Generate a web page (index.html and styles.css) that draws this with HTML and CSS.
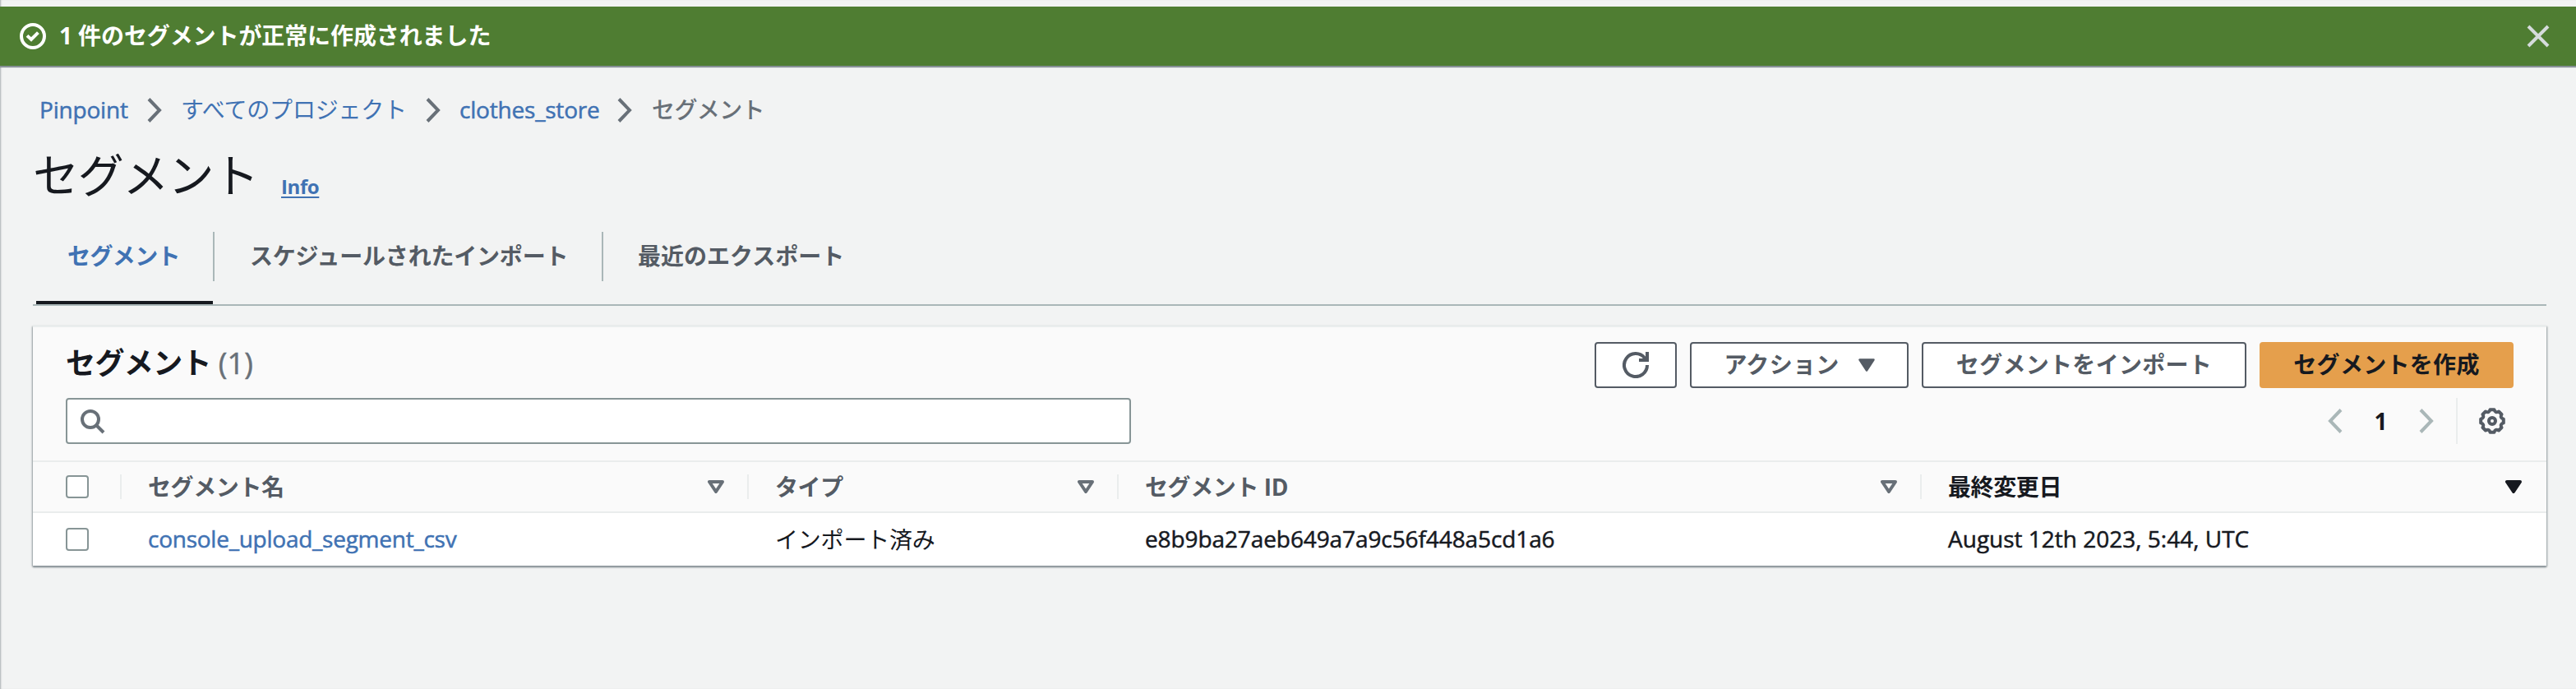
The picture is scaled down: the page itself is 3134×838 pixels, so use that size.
FILE: index.html
```html
<!DOCTYPE html>
<html lang="ja">
<head>
<meta charset="utf-8">
<title>セグメント</title>
<link rel="stylesheet" href="styles.css">
</head>
<body>
<div class="flash">
  <svg class="icon-32" viewBox="0 0 16 16" fill="none" stroke="#fff" stroke-width="2"><circle cx="8" cy="8" r="7"/><path d="M4.500 7.700l2.500 2.300 4.200-4.200"/></svg>
  <span class="flash-text">1 件のセグメントが正常に作成されました</span>
  <svg class="close" viewBox="0 0 28 28" stroke="#d5dbdb" stroke-width="4"><path d="M2 2l24 24M26 2L2 26"/></svg>
</div>
<main class="page">
  <nav class="crumbs">
    <a class="crumb c1">Pinpoint</a>
    <svg class="chev" viewBox="0 0 18 30"><path d="M2 1.500L15 15L2 28.500"/></svg>
    <a class="crumb c2">すべてのプロジェクト</a>
    <svg class="chev" viewBox="0 0 18 30"><path d="M2 1.500L15 15L2 28.500"/></svg>
    <a class="crumb c3">clothes_store</a>
    <svg class="chev" viewBox="0 0 18 30"><path d="M2 1.500L15 15L2 28.500"/></svg>
    <span class="crumb here">セグメント</span>
  </nav>
  <header class="title"><h1>セグメント</h1><a class="info">Info</a></header>
  <div class="tabs">
    <div class="tab active"><span>セグメント</span></div>
    <div class="tab t2"><span>スケジュールされたインポート</span></div>
    <div class="tab t3"><span>最近のエクスポート</span></div>
  </div>
  <section class="card">
    <div class="card-head">
      <div class="head-row">
        <h2>セグメント <span class="count">(1)</span></h2>
        <div class="actions">
          <button class="btn refresh"><svg class="icon-32" viewBox="0 0 32 32" fill="none" stroke="#545b64" stroke-width="4"><path d="M30 16a14 14 0 1 1-3-8.600L29 10"/><path d="M30 0v10H20"/></svg></button>
          <button class="btn action">アクション<svg class="tri" viewBox="0 0 20 16"><path d="M1.500 1.500h17L10 14.500z" fill="#545b64" stroke="#545b64" stroke-width="2.500" stroke-linejoin="round"/></svg></button>
          <button class="btn import">セグメントをインポート</button>
          <button class="btn primary">セグメントを作成</button>
        </div>
      </div>
      <div class="filter-row">
        <div class="search"><svg viewBox="0 0 30 30" fill="none" stroke="#687078" stroke-width="4"><circle cx="12" cy="12" r="10"/><path d="M19 19l9 9"/></svg></div>
        <div class="pager">
          <svg class="pg" viewBox="0 0 18 30"><path d="M16 1.500L3 15l13 13.500"/></svg>
          <b>1</b>
          <svg class="pg" viewBox="0 0 18 30"><path d="M2 1.500L15 15L2 28.500"/></svg>
          <span class="gear"><svg class="icon-32" viewBox="-16 -16 32 32" fill="none" stroke="#545b64" stroke-width="4" stroke-linejoin="round"><path d="M-2.400-13.800H2.400Q3.800-9.200 8-11.500L11.500-8Q9.200-3.800 13.800-2.400V2.400Q9.200 3.800 11.500 8L8 11.500Q3.800 9.200 2.400 13.800H-2.400Q-3.800 9.200-8 11.500L-11.500 8Q-9.200 3.800-13.800 2.400V-2.400Q-9.200-3.800-11.500-8L-8-11.500Q-3.800-9.200-2.400-13.800z"/><circle r="4"/></svg></span>
        </div>
      </div>
    </div>
    <div class="row thead">
      <div class="cell check"><i class="box"></i></div>
      <div class="cell">セグメント名<svg class="tri" viewBox="0 0 20 16"><path d="M2 2h16L10 14z"/></svg></div>
      <div class="cell">タイプ<svg class="tri" viewBox="0 0 20 16"><path d="M2 2h16L10 14z"/></svg></div>
      <div class="cell">セグメント ID<svg class="tri" viewBox="0 0 20 16"><path d="M2 2h16L10 14z"/></svg></div>
      <div class="cell sorted">最終変更日<svg class="tri" viewBox="0 0 20 16"><path d="M2 2h16L10 14z"/></svg></div>
    </div>
    <div class="row tbody">
      <div class="cell check"><i class="box"></i></div>
      <div class="cell"><a class="name">console_upload_segment_csv</a></div>
      <div class="cell">インポート済み</div>
      <div class="cell"><span class="sid">e8b9ba27aeb649a7a9c56f448a5cd1a6</span></div>
      <div class="cell"><span class="date">August 12th 2023, 5:44, UTC</span></div>
    </div>
  </section>
</main>
</body>
</html>
```
FILE: styles.css
```css
* { box-sizing: border-box; }
body {
  margin: 0;
  padding-top: 8px;
  height: 838px;
  overflow: hidden;
  background: #f2f3f3;
  color: #16191f;
  font: 28px/44px "Open Sans", "Noto Sans CJK JP", sans-serif;
  box-shadow: inset 2px 0 2px -1px #aab0b3;
}
svg { display: block; flex: none; }
.icon-32 { width: 32px; height: 32px; }
a { color: #4072b3; }

.flash {
  display: flex;
  align-items: center;
  height: 72px;
  padding: 0 32px 0 24px;
  background: #4f7d32;
  color: #fff;
  font-weight: 700;
  box-shadow: 0 2px 1px #879096;
}
.flash-text { flex: 1; margin-left: 16px; padding-bottom: 2px; letter-spacing: -.1px; white-space: nowrap; }
.close { width: 28px; height: 28px; }

.page { padding: 0 36px 0 40px; }
.crumbs { display: flex; align-items: center; height: 44px; margin: 32px 0 0 8px; }
.crumb { padding-bottom: 2px; letter-spacing: -.2px; white-space: nowrap; }
.c1 { width: 131px; letter-spacing: -.2px; }
.c2 { width: 298px; margin-left: 23px; }
.c3 { width: 192px; margin-left: 23px; letter-spacing: -.2px; }
.here { margin-left: 24px; color: #687078; font-weight: 500; letter-spacing: -.6px; }
.chev { width: 18px; height: 30px; fill: none; stroke: #687078; stroke-width: 4; margin-top: -1px; }

/* The regular Latin face is slightly thickened to sit evenly beside the kana. */
.c1, .c3, .count, .name, .sid, .date { -webkit-text-stroke: .5px currentColor; }

.title { display: flex; align-items: baseline; height: 80px; margin-top: 16px; }
h1 { margin: 0; width: 302px; font-size: 56px; font-weight: 400; line-height: 80px; letter-spacing: -1.2px; white-space: nowrap; }
.info { font-size: 24px; font-weight: 700; letter-spacing: -.4px; line-height: 40px; text-decoration: underline; text-decoration-thickness: 2px; text-underline-offset: 3px; transform: translateY(2px); }

.tabs { display: flex; height: 118px; margin-top: 2px; padding: 28px 0 0 4px; border-bottom: 2px solid #aab7b8; font-weight: 700; color: #545b64; letter-spacing: -.2px; }
.tab { display: flex; align-items: center; height: 60px; padding-bottom: 2px; white-space: nowrap; }
.tab.active { width: 215px; height: 88px; padding: 0 0 26px 38px; color: #4072b3; border-bottom: 4px solid #16191f; letter-spacing: -.6px; }
.t2 { width: 475px; padding-left: 43px; border-left: 2px solid #aab7b8; border-right: 2px solid #aab7b8; }
.t3 { padding-left: 42px; letter-spacing: 0; }

.card { margin-top: 24px; border-top: 2px solid #eaeded; background: #fff; box-shadow: 0 2px 2px #879196, 1px 1px 2px #aab0b3, -1px 1px 2px #aab0b3; }
.card-head { height: 164px; padding: 18px 40px 0; background: #fafafa; border-bottom: 2px solid #eaeded; }
.head-row { display: flex; justify-content: space-between; height: 56px; }
h2 { margin: 0; font-size: 36px; font-weight: 700; line-height: 52px; letter-spacing: -.6px; white-space: nowrap; }
.count { color: #687078; font-weight: 400; letter-spacing: .2px; }
.actions { display: flex; gap: 16px; }
.btn { display: flex; align-items: center; justify-content: center; height: 56px; padding: 0 0 2px; border: 2px solid #545b64; border-radius: 4px; background: #fff; color: #545b64; font: inherit; font-weight: 700; letter-spacing: .3px; white-space: nowrap; }
.refresh { width: 100px; padding: 0; }
.action { width: 266px; gap: 23px; }
.action .tri { margin-top: 2px; }
.import { width: 395px; }
.primary { width: 309px; border-color: #e59f4c; background: #e59f4c; color: #16191f; }
.tri { width: 20px; height: 16px; }
.filter-row { display: flex; justify-content: space-between; height: 56px; margin-top: 12px; }
.search { width: 1296px; padding: 12px 16px; border: 2px solid #879596; border-radius: 4px; background: #fff; }
.search svg { width: 30px; height: 30px; }
.pager { display: flex; align-items: center; margin-right: 10px; }
.pg { width: 18px; height: 30px; fill: none; stroke: #aab7b8; stroke-width: 4; }
.pager b { width: 93px; text-align: center; }
.gear { display: flex; align-items: center; height: 56px; margin-left: 27px; padding-left: 26px; border-left: 2px solid #eaeded; }

.row { display: grid; grid-template-columns: 108px 763px 450px 977px 760px; align-items: center; }
.cell { display: flex; align-items: center; padding: 0 28px 0 32px; white-space: nowrap; }
.thead { height: 62px; background: #fafafa; border-bottom: 2px solid #eaeded; color: #545b64; font-weight: 700; letter-spacing: -.4px; }
.thead .cell { height: 30px; justify-content: space-between; border-right: 2px solid #eaeded; }
.thead .sorted { padding-right: 30px; border: 0; color: #16191f; }
.thead .tri path { fill: none; stroke: #687078; stroke-width: 4; stroke-linejoin: round; }
.thead .sorted .tri path { fill: #16191f; stroke: #16191f; }
.row .check { padding: 0 0 0 40px; }
.box { width: 28px; height: 28px; border: 2px solid #879596; border-radius: 4px; background: #fff; }
.tbody { height: 64px; letter-spacing: -.2px; }
.name, .sid, .date { padding-bottom: 2px; }
.name { letter-spacing: -.25px; }
.sid { letter-spacing: -.1px; }
.date { letter-spacing: 0; }
```
